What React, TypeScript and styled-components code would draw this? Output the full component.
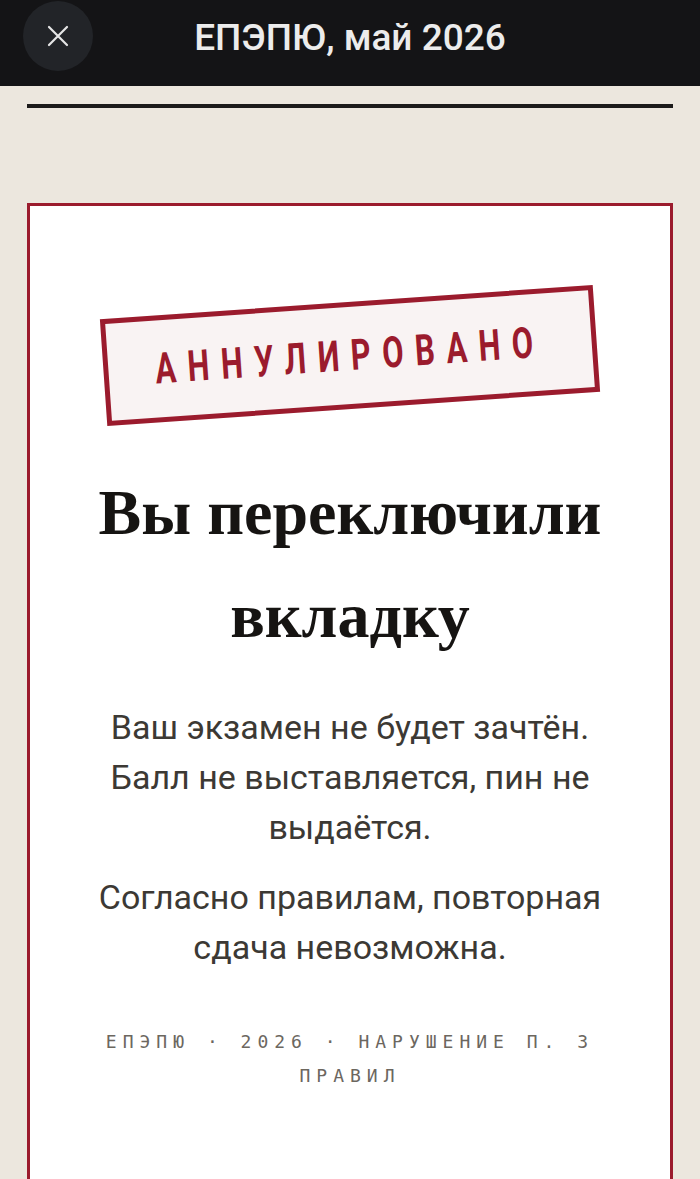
import React from "react";
import styled, { createGlobalStyle } from "styled-components";

const GlobalStyle = createGlobalStyle`
  html, body {
    margin: 0;
    padding: 0;
    background: #ece7de;
  }
  * { box-sizing: border-box; }
`;

const Page = styled.div`
  min-height: 100vh;
  background: #ece7de;
`;

const TopBar = styled.header`
  height: 86px;
  background: #141416;
  display: grid;
  grid-template-columns: 1fr auto 1fr;
  align-items: center;
  padding: 0 23px;
`;

const CloseButton = styled.button`
  width: 70px;
  height: 70px;
  border-radius: 50%;
  border: none;
  background: #222428;
  display: flex;
  align-items: center;
  justify-content: center;
  justify-self: start;
  align-self: start;
  margin-top: 1px;
  padding: 0;
  cursor: pointer;
`;

const Title = styled.h1`
  margin: 0;
  margin-top: -12px;
  font-family: Roboto, "Liberation Sans", sans-serif;
  font-weight: 500;
  font-size: 37px;
  color: #ececec;
  letter-spacing: 0;
`;

const Content = styled.main`
  padding: 18px 27px 0;
`;

const Rule = styled.div`
  height: 4px;
  background: #1c1b1a;
`;

const Card = styled.section`
  margin-top: 95px;
  border: 3px solid #9b1b2d;
  background: #ffffff;
  padding: 96px 48px 160px;
  display: flex;
  flex-direction: column;
  align-items: center;
`;

const Stamp = styled.div`
  width: 494px;
  height: 107px;
  border: 5px solid #9b1b2d;
  background: #f9f3f3;
  transform: rotate(-4deg);
  display: flex;
  align-items: center;
  justify-content: center;
`;

const StampText = styled.span`
  display: inline-block;
  font-family: Roboto, "Liberation Sans", sans-serif;
  font-weight: 700;
  font-size: 43px;
  line-height: 1;
  letter-spacing: 16px;
  color: #9b1b2d;
  transform: scaleX(0.72);
  white-space: nowrap;
  flex-shrink: 0;
`;

const Heading = styled.h2`
  margin: 52px 0 0;
  font-family: "Liberation Serif", "DejaVu Serif", serif;
  font-weight: 700;
  font-size: 64px;
  line-height: 103px;
  color: #161412;
  text-align: center;
`;

const Paragraph = styled.p<{ $first?: boolean }>`
  margin: ${(p) => (p.$first ? "35px" : "20px")} 0 0;
  font-family: Roboto, "Noto Sans", sans-serif;
  font-weight: 400;
  font-size: 34px;
  line-height: 50px;
  color: #3c3934;
  text-align: center;
`;

const Footer = styled.p`
  margin: 53px 0 0;
  font-family: "DejaVu Sans Mono", "Liberation Mono", monospace;
  font-size: 18px;
  line-height: 34px;
  letter-spacing: 6px;
  color: #6c675f;
  text-align: center;
  text-transform: uppercase;
`;

const CloseIcon = () => (
  <svg width="22" height="22" viewBox="0 0 22 22" fill="none">
    <path d="M2 2 L20 20 M20 2 L2 20" stroke="#e6e6e6" strokeWidth="2.2" strokeLinecap="round" />
  </svg>
);

export default function App() {
  return (
    <Page>
      <GlobalStyle />
      <TopBar>
        <CloseButton aria-label="Закрыть">
          <CloseIcon />
        </CloseButton>
        <Title>ЕПЭПЮ, май 2026</Title>
        <span />
      </TopBar>
      <Content>
        <Rule />
        <Card>
          <Stamp>
            <StampText>АННУЛИРОВАНО</StampText>
          </Stamp>
          <Heading>
            Вы переключили
            <br />
            вкладку
          </Heading>
          <Paragraph $first>
            Ваш экзамен не будет зачтён. Балл не выставляется, пин не выдаётся.
          </Paragraph>
          <Paragraph>Согласно правилам, повторная сдача невозможна.</Paragraph>
          <Footer>ЕПЭПЮ · 2026 · нарушение п. 3 правил</Footer>
        </Card>
      </Content>
    </Page>
  );
}
